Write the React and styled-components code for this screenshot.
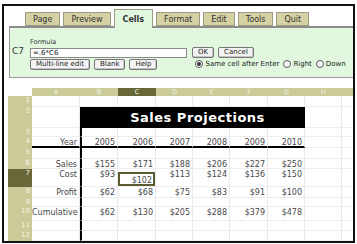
import React from "react";
import styled, { createGlobalStyle } from "styled-components";

const GlobalStyle = createGlobalStyle`
  body {
    margin: 0;
    background: #fff;
    font-family: "DejaVu Sans", Verdana, sans-serif;
  }
`;

const Frame = styled.div`
  box-sizing: border-box;
  width: 353px;
  height: 239px;
  margin: 4px 0 0 2px;
  border: 2px solid #111;
  overflow: hidden;
  background: #fff;
`;

const TabBar = styled.div`
  display: flex;
  align-items: flex-end;
  gap: 3px;
  height: 20px;
  padding-left: 21px;
`;

const Tab = styled.div`
  box-sizing: border-box;
  height: ${(p) => (p.$active ? "19px" : "14px")};
  margin-bottom: ${(p) => (p.$active ? "-2px" : "0")};
  padding: ${(p) => (p.$active ? "4px 8px 0" : "1px 7px 0")};
  position: relative;
  z-index: ${(p) => (p.$active ? 1 : 0)};
  background: ${(p) => (p.$active ? "#e1f8df" : "#d5d1a3")};
  border: 1px solid #9c9984;
  border-bottom: ${(p) => (p.$active ? "none" : "1px solid #9c9984")};
  font-size: 8px;
  line-height: 11px;
  font-weight: ${(p) => (p.$active ? "bold" : "normal")};
  color: #333;
  white-space: nowrap;
`;

const Panel = styled.div`
  box-sizing: border-box;
  display: flex;
  align-items: flex-start;
  height: 52px;
  margin-left: 5px;
  padding: 10px 0 0 2px;
  background: #e1f8df;
  border: 1px solid #9a9a9a;
  border-top: 2px solid #8c8c8c;
  border-right: none;
`;

const CellRef = styled.div`
  width: 18px;
  margin-top: 8px;
  font-size: 9px;
  line-height: 10px;
  color: #333;
`;

const Editor = styled.div`
  display: flex;
  flex-direction: column;
  gap: 1px;
`;

const Caption = styled.div`
  font-size: 6.5px;
  line-height: 8px;
  color: #333;
`;

const Line = styled.div`
  display: flex;
  align-items: center;
  gap: 4px;
`;

const FormulaInput = styled.div`
  box-sizing: border-box;
  flex-shrink: 0;
  width: 157px;
  height: 10px;
  margin-right: 1px;
  padding-left: 2px;
  background: #fff;
  border: 1px solid #8a8a8a;
  font-size: 7px;
  line-height: 8px;
  color: #222;
`;

const Button = styled.div`
  box-sizing: border-box;
  flex-shrink: 0;
  height: 11px;
  padding: 0 5px;
  background: #f3f3f3;
  border: 1px solid #777;
  border-radius: 2px;
  box-shadow: inset -1px -1px 0 #c4c4c4;
  font-size: 7px;
  line-height: 9px;
  color: #222;
  white-space: nowrap;
`;

const Radios = styled.div`
  display: flex;
  align-items: center;
  gap: 4px;
  margin: -2px 0 0 34px;
  font-size: 7px;
  line-height: 8px;
  color: #222;
  white-space: nowrap;
`;

const Radio = styled.span`
  box-sizing: border-box;
  display: inline-flex;
  align-items: center;
  justify-content: center;
  width: 8px;
  height: 8px;
  margin-right: 2px;
  border: 1px solid #555;
  border-radius: 50%;
  background: #fff;
  &::after {
    content: "";
    width: 4px;
    height: 4px;
    border-radius: 50%;
    background: ${(p) => (p.$on ? "#333" : "transparent")};
  }
`;

const Option = styled.span`
  display: inline-flex;
  align-items: center;
`;

const Sheet = styled.div`
  display: grid;
  grid-template-columns: 24px 48px 38px 38px 37px 37px 38px 37px 37px 37px;
  grid-template-rows: 8px 11px 21px 9px 11px 11px 10px 18px 11px 9px 14px 10px 10px;
  margin: 10px 0 0 4px;
`;

const Corner = styled.div``;

const ColHead = styled.div`
  background: ${(p) => (p.$sel ? "#67673a" : "#cbcb9a")};
  color: #f4f4e4;
  font-size: 6.5px;
  line-height: 8px;
  text-align: center;
`;

const RowHead = styled.div`
  box-sizing: border-box;
  padding-right: 2px;
  background: ${(p) => (p.$sel ? "#67673a" : "#cbcb9a")};
  color: #f4f4e4;
  font-size: 7px;
  line-height: 9px;
  text-align: right;
  overflow: hidden;
`;

const Cell = styled.div`
  box-sizing: border-box;
  padding: ${(p) => (p.$picked ? "0" : "1px 2px 0 0")};
  border-right: 1px solid #e9e9e9;
  border-bottom: ${(p) => (p.$rule ? "2px solid #000" : "1px solid #ededed")};
  border-left: ${(p) => (p.$divider ? "2px solid #000" : "none")};
  font-size: 8px;
  line-height: 10px;
  color: #484848;
  text-align: right;
  white-space: nowrap;
  overflow: hidden;
`;

const Selected = styled.div`
  box-sizing: border-box;
  height: 14px;
  margin-top: 3px;
  padding: 2px 1px 0 0;
  border: 2px solid #5c5c30;
  line-height: 9px;
`;

const Title = styled.div`
  grid-column: span 6;
  display: flex;
  align-items: center;
  justify-content: center;
  padding-left: 10px;
  background: #000;
  color: #fff;
  font-size: 13px;
  font-weight: bold;
  letter-spacing: 0.5px;
`;

const tabs = ["Page", "Preview", "Cells", "Format", "Edit", "Tools", "Quit"];
const letters = ["A", "B", "C", "D", "E", "F", "G", "H", ""];

const rows = [
  { n: 1 },
  { n: 2, title: "Sales Projections" },
  { n: 3 },
  { n: 4, rule: true, data: ["Year", "2005", "2006", "2007", "2008", "2009", "2010"] },
  { n: 5 },
  { n: 6, data: ["Sales", "$155", "$171", "$188", "$206", "$227", "$250"] },
  { n: 7, data: ["Cost", "$93", "$102", "$113", "$124", "$136", "$150"] },
  { n: 8, data: ["Profit", "$62", "$68", "$75", "$83", "$91", "$100"] },
  { n: 9 },
  { n: 10, data: ["Cumulative", "$62", "$130", "$205", "$288", "$379", "$478"] },
  { n: 11 },
  { n: 12 },
];

const SEL_ROW = 7;
const SEL_COL = 2;

function SheetRow({ row }) {
  const cells = [<RowHead key="h" $sel={row.n === SEL_ROW}>{row.n}</RowHead>];
  if (row.title) {
    cells.push(<Cell key="a" />);
    cells.push(<Title key="t">{row.title}</Title>);
    cells.push(<Cell key="h1" />, <Cell key="i1" />);
    return cells;
  }
  letters.forEach((_, i) => {
    const value = row.data ? row.data[i] : "";
    const picked = row.n === SEL_ROW && i === SEL_COL;
    cells.push(
      <Cell key={i} $rule={row.rule && i < 7} $divider={i === 1 && row.n > 2} $picked={picked}>
        {picked ? <Selected>{value}</Selected> : value}
      </Cell>
    );
  });
  return cells;
}

export default function App() {
  return (
    <>
      <GlobalStyle />
      <Frame>
        <TabBar>
          {tabs.map((t) => (
            <Tab key={t} $active={t === "Cells"}>
              {t}
            </Tab>
          ))}
        </TabBar>
        <Panel>
          <CellRef>C7</CellRef>
          <Editor>
            <Caption>Formula</Caption>
            <Line>
              <FormulaInput>=.6*C6</FormulaInput>
              <Button>OK</Button>
              <Button>Cancel</Button>
            </Line>
            <Line>
              <Button>Multi-line edit</Button>
              <Button>Blank</Button>
              <Button>Help</Button>
              <Radios>
                <Option>
                  <Radio $on />
                  Same cell after Enter
                </Option>
                <Option>
                  <Radio />
                  Right
                </Option>
                <Option>
                  <Radio />
                  Down
                </Option>
              </Radios>
            </Line>
          </Editor>
        </Panel>
        <Sheet>
          <Corner />
          {letters.map((l, i) => (
            <ColHead key={i} $sel={i === SEL_COL}>
              {l}
            </ColHead>
          ))}
          {rows.map((r) => (
            <SheetRow key={r.n} row={r} />
          ))}
        </Sheet>
      </Frame>
    </>
  );
}
